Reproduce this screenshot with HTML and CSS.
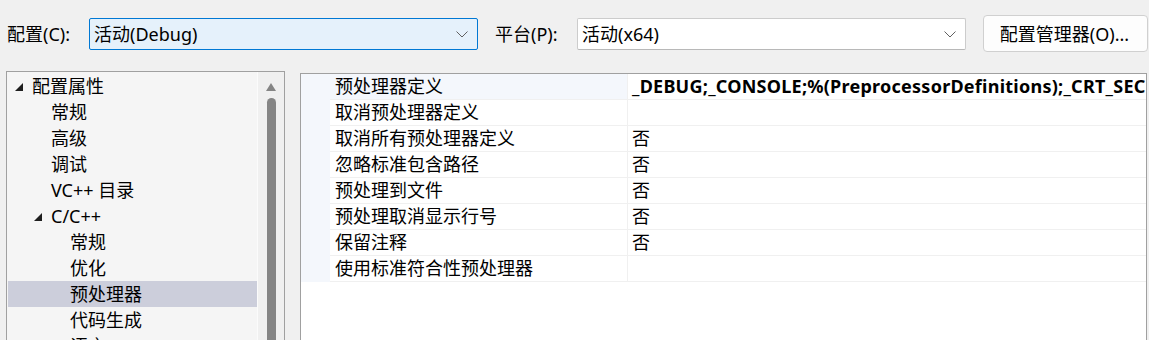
FILE: index.html
```html
<!DOCTYPE html>
<html lang="zh-CN">
<head>
    <meta charset="UTF-8">
    <title>属性页</title>
    <link rel="stylesheet" href="styles.css">
</head>
<body>

    <div class="toolbar">
        <label class="field-label">配置(C):</label>
        <div class="combo combo-focus">
            <span class="combo-text">活动(Debug)</span>
            <svg class="chevron" width="12" height="7" viewBox="0 0 12 7"><path d="M0.5 0.5 L6 6 L11.5 0.5" fill="none" stroke="#606060" stroke-width="1"/></svg>
        </div>
        <label class="field-label">平台(P):</label>
        <div class="combo">
            <span class="combo-text">活动(x64)</span>
            <svg class="chevron" width="12" height="7" viewBox="0 0 12 7"><path d="M0.5 0.5 L6 6 L11.5 0.5" fill="none" stroke="#606060" stroke-width="1"/></svg>
        </div>
        <button class="btn">配置管理器(O)...</button>
    </div>

    <div class="main">
        <div class="tree">
            <ul class="tree-list">
                <li class="node lvl0"><svg class="twisty" width="8" height="8" viewBox="0 0 8 8"><polygon points="8,0 8,8 0,8" fill="#1e1e1e"/></svg>配置属性</li>
                <li class="node lvl1">常规</li>
                <li class="node lvl1">高级</li>
                <li class="node lvl1">调试</li>
                <li class="node lvl1">VC++ 目录</li>
                <li class="node lvl1"><svg class="twisty" width="8" height="8" viewBox="0 0 8 8"><polygon points="8,0 8,8 0,8" fill="#1e1e1e"/></svg>C/C++</li>
                <li class="node lvl2">常规</li>
                <li class="node lvl2">优化</li>
                <li class="node lvl2 selected">预处理器</li>
                <li class="node lvl2">代码生成</li>
                <li class="node lvl2">语言</li>
            </ul>
            <div class="scrollbar">
                <svg class="scroll-arrow" width="10" height="8" viewBox="0 0 10 8"><polygon points="5,0 10,8 0,8" fill="#858585"/></svg>
                <div class="scroll-thumb"></div>
            </div>
        </div>

        <div class="grid">
            <div class="row first">
                <div class="margin"></div>
                <div class="name">预处理器定义</div>
                <div class="value bold">_DEBUG;_CONSOLE;%(PreprocessorDefinitions);_CRT_SECURE_NO_WARNINGS</div>
            </div>
            <div class="row">
                <div class="margin"></div>
                <div class="name">取消预处理器定义</div>
                <div class="value"></div>
            </div>
            <div class="row">
                <div class="margin"></div>
                <div class="name">取消所有预处理器定义</div>
                <div class="value">否</div>
            </div>
            <div class="row">
                <div class="margin"></div>
                <div class="name">忽略标准包含路径</div>
                <div class="value">否</div>
            </div>
            <div class="row">
                <div class="margin"></div>
                <div class="name">预处理到文件</div>
                <div class="value">否</div>
            </div>
            <div class="row">
                <div class="margin"></div>
                <div class="name">预处理取消显示行号</div>
                <div class="value">否</div>
            </div>
            <div class="row">
                <div class="margin"></div>
                <div class="name">保留注释</div>
                <div class="value">否</div>
            </div>
            <div class="row">
                <div class="margin"></div>
                <div class="name">使用标准符合性预处理器</div>
                <div class="value"></div>
            </div>
        </div>
    </div>

</body>
</html>
```

FILE: styles.css
```css
/* General */
body {
    margin: 0;
    background-color: #f0f0f0;
    font-family: "Noto Sans", "Noto Sans CJK SC", sans-serif;
    font-size: 18px;
    color: #000;
    overflow: hidden;
}

/* Toolbar */
.toolbar {
    display: flex;
    align-items: center;
    height: 36px;
    padding: 16px 0 0 7px;
}

.field-label {
    width: 82px;
    flex-shrink: 0;
    line-height: 32px;
}

.combo {
    box-sizing: border-box;
    width: 389px;
    height: 32px;
    margin-right: 17px;
    display: flex;
    align-items: center;
    justify-content: space-between;
    padding: 0 9px 0 4px;
    background-color: #ffffff;
    border: 1px solid #cccccc;
    border-bottom-color: #b8b8b8;
    border-radius: 2px;
}

.combo-focus {
    background-color: #e5f1fb;
    border: 1px solid #0078d4;
}

.combo-text {
    line-height: 30px;
}

.btn {
    box-sizing: border-box;
    width: 165px;
    height: 37px;
    margin-top: -2px;
    font: inherit;
    color: #000;
    background-color: #fdfdfd;
    border: 1px solid #d0d0d0;
    border-radius: 4px;
    padding: 0 2px 0 0;
}

/* Main area */
.main {
    display: flex;
    align-items: flex-start;
    padding: 19px 0 0 6px;
}

/* Tree */
.tree {
    box-sizing: border-box;
    width: 279px;
    height: 269px;
    display: flex;
    border: 1px solid #a0a0a0;
    border-bottom: none;
    background-color: #f5f5f5;
    margin-right: 15px;
    overflow: hidden;
}

.tree-list {
    list-style: none;
    margin: 0;
    padding: 1px 0 0 1px;
    width: 249px;
    border-right: 1px solid #fbfbfb;
}

.node {
    position: relative;
    height: 26px;
    line-height: 26px;
    white-space: nowrap;
}

.lvl0 { padding-left: 24px; }
.lvl1 { padding-left: 43px; }
.lvl2 { padding-left: 62px; }

.node.selected {
    background-color: #cccedb;
}

.twisty {
    position: absolute;
    top: 10px;
    margin-left: -17px;
}

.scrollbar {
    flex: 1;
    background-color: #f0f0f0;
    display: flex;
    flex-direction: column;
    align-items: center;
    padding-top: 11px;
}

.scroll-arrow {
    margin-bottom: 7px;
}

.scroll-thumb {
    width: 9px;
    flex: 1;
    background-color: #858585;
    border-radius: 5px 5px 0 0;
}

/* Property grid */
.grid {
    box-sizing: border-box;
    width: 847px;
    height: 267px;
    margin-top: 2px;
    border: 1px solid #a0a0a0;
    border-bottom: none;
    background-color: #ffffff;
    overflow: hidden;
}

.row {
    display: flex;
    height: 26px;
    box-sizing: border-box;
    border-bottom: 1px solid #f0f0f0;
}

.margin {
    width: 29px;
    flex-shrink: 0;
    background-color: #f4f7fc;
    margin-bottom: -1px;
}

.name {
    box-sizing: border-box;
    width: 298px;
    flex-shrink: 0;
    padding-left: 5px;
    line-height: 25px;
    white-space: nowrap;
    border-right: 1px solid #f0f0f0;
}

.row.first .name {
    background-color: #f4f7fc;
}

.value {
    flex: 1;
    padding-left: 4px;
    line-height: 25px;
    white-space: nowrap;
    overflow: hidden;
}

.value.bold {
    font-weight: bold;
    letter-spacing: 0.25px;
}
```
